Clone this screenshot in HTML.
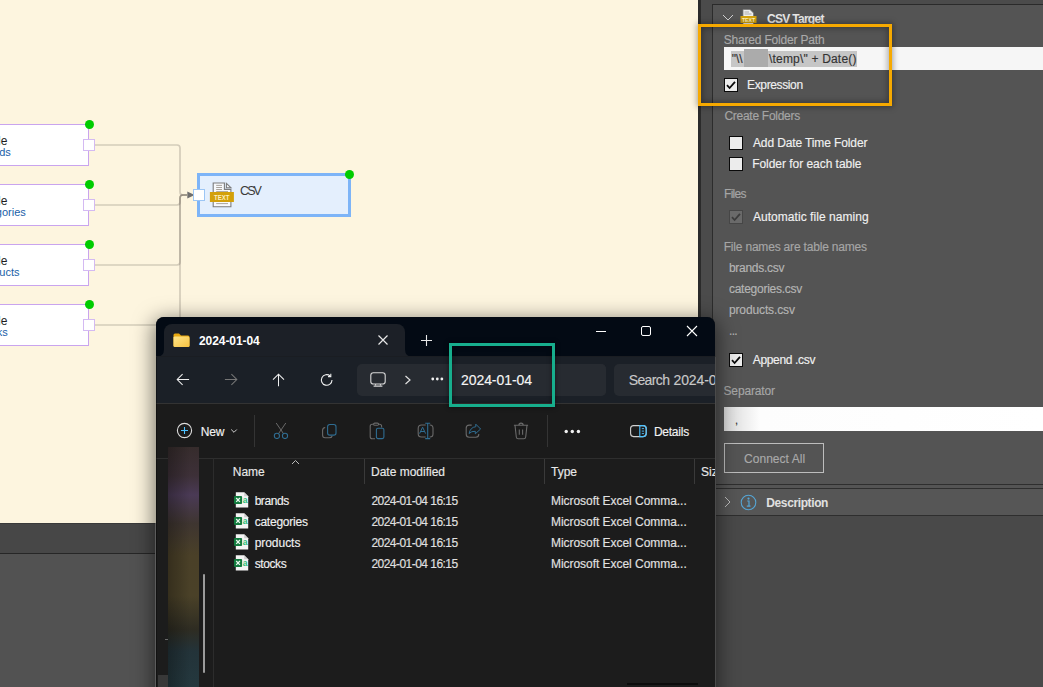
<!DOCTYPE html>
<html><head><meta charset="utf-8">
<style>
*{margin:0;padding:0;box-sizing:border-box}
html,body{width:1043px;height:687px;overflow:hidden;background:#fdf5df;font-family:"Liberation Sans",sans-serif}
.a{position:absolute}
.t{position:absolute;white-space:nowrap;line-height:1;-webkit-text-stroke:0.15px currentColor}
.tb{-webkit-text-stroke:0}
</style></head>
<body>
<div class="a" style="left:0;top:0;width:698px;height:523px;background:#fdf5df"></div>
<svg class="a" style="left:0;top:0" width="698" height="523">
<g fill="none" stroke="rgba(95,90,80,0.26)" stroke-width="1.7">
<path d="M95 145 H177 Q180 145 180 148 V192 Q180 195 183 195 H187"/>
<path d="M95 205 H177 Q180 205 180 202 V198 Q180 195 183 195 H187"/>
<path d="M95 265 H177 Q180 265 180 262 V198 Q180 195 183 195 H187"/>
<path d="M95 325 H177 Q180 325 180 322 V198 Q180 195 183 195 H187"/>
</g>
<path d="M187.3 191.4 L194.6 195 L187.3 198.6 Z" fill="#6e6e6e"/>
</svg>
<div class="a" style="left:-20px;top:124px;width:109px;height:42px;background:#fff;border:1px solid #c9a4ee;border-left:none"></div>
<div class="t" id="nl1_0" style="left:0.00px;top:134.84px;font-size:12px;color:#1e1e1e;letter-spacing:0.000px;width:7.4px;height:12px;-webkit-text-stroke:0"><span style="position:absolute;right:0;top:0">Table</span></div>
<div class="t" id="nl2_0" style="left:0.00px;top:146.69px;font-size:11px;color:#1a5fa8;letter-spacing:0.000px;width:10.8px;height:11px;-webkit-text-stroke:0"><span style="position:absolute;right:0;top:0">brands</span></div>
<div class="a" style="left:83px;top:139px;width:12px;height:12px;background:#fff;border:1px solid #d4baf2"></div>
<div class="a" style="left:84.5px;top:120px;width:9px;height:9px;border-radius:50%;background:#00cc00"></div>
<div class="a" style="left:-20px;top:184px;width:109px;height:42px;background:#fff;border:1px solid #c9a4ee;border-left:none"></div>
<div class="t" id="nl1_1" style="left:0.00px;top:194.84px;font-size:12px;color:#1e1e1e;letter-spacing:0.000px;width:7.4px;height:12px;-webkit-text-stroke:0"><span style="position:absolute;right:0;top:0">Table</span></div>
<div class="t" id="nl2_1" style="left:0.00px;top:206.69px;font-size:11px;color:#1a5fa8;letter-spacing:0.000px;width:25.8px;height:11px;-webkit-text-stroke:0"><span style="position:absolute;right:0;top:0">categories</span></div>
<div class="a" style="left:83px;top:199px;width:12px;height:12px;background:#fff;border:1px solid #d4baf2"></div>
<div class="a" style="left:84.5px;top:180px;width:9px;height:9px;border-radius:50%;background:#00cc00"></div>
<div class="a" style="left:-20px;top:244px;width:109px;height:42px;background:#fff;border:1px solid #c9a4ee;border-left:none"></div>
<div class="t" id="nl1_2" style="left:0.00px;top:254.84px;font-size:12px;color:#1e1e1e;letter-spacing:0.000px;width:7.4px;height:12px;-webkit-text-stroke:0"><span style="position:absolute;right:0;top:0">Table</span></div>
<div class="t" id="nl2_2" style="left:0.00px;top:266.69px;font-size:11px;color:#1a5fa8;letter-spacing:0.000px;width:19.5px;height:11px;-webkit-text-stroke:0"><span style="position:absolute;right:0;top:0">products</span></div>
<div class="a" style="left:83px;top:259px;width:12px;height:12px;background:#fff;border:1px solid #d4baf2"></div>
<div class="a" style="left:84.5px;top:240px;width:9px;height:9px;border-radius:50%;background:#00cc00"></div>
<div class="a" style="left:-20px;top:304px;width:109px;height:42px;background:#fff;border:1px solid #c9a4ee;border-left:none"></div>
<div class="t" id="nl1_3" style="left:0.00px;top:314.84px;font-size:12px;color:#1e1e1e;letter-spacing:0.000px;width:7.4px;height:12px;-webkit-text-stroke:0"><span style="position:absolute;right:0;top:0">Table</span></div>
<div class="t" id="nl2_3" style="left:0.00px;top:326.69px;font-size:11px;color:#1a5fa8;letter-spacing:0.000px;width:7.7px;height:11px;-webkit-text-stroke:0"><span style="position:absolute;right:0;top:0">stocks</span></div>
<div class="a" style="left:83px;top:319px;width:12px;height:12px;background:#fff;border:1px solid #d4baf2"></div>
<div class="a" style="left:84.5px;top:300px;width:9px;height:9px;border-radius:50%;background:#00cc00"></div>
<div class="a" style="left:197px;top:173px;width:154px;height:44px;background:#e4effd;border:3px solid #7db4f7"></div>
<div class="a" style="left:193px;top:189px;width:12px;height:12px;background:#fff;border:1px solid #9cc6f5"></div>
<div class="a" style="left:345px;top:170px;width:9px;height:9px;border-radius:50%;background:#00cc00"></div>
<svg class="a" style="left:205px;top:178px" width="35" height="32" viewBox="0 0 35 32">
<path d="M8.2 5 H19.4 V11.4 H25.9 V28.7 H8.2Z" fill="#f7f9fc" stroke="#7c7c7c" stroke-width="1.1"/>
<path d="M21.4 5.4 L25.9 9.7 H21.4Z" fill="#f7f9fc" stroke="#7c7c7c" stroke-width="1.1" stroke-linejoin="miter"/>
<path d="M11.2 7.4 H17 M11.2 9.5 H17 M11.2 11.5 H17 M11.2 13.6 H23 M11.2 25.6 H23" stroke="#a09a92" stroke-width="0.9"/>
<rect x="4.9" y="14" width="24" height="10" fill="#d3a00a"/>
<text x="16.8" y="21.9" font-size="8" fill="#fbeec0" text-anchor="middle" font-family="Liberation Sans" font-weight="bold" textLength="15.4" lengthAdjust="spacingAndGlyphs">TEXT</text>
</svg>
<div class="t" id="csv" style="left:240.00px;top:184.72px;font-size:12.5px;color:#3a3a3a;letter-spacing:-1.900px;-webkit-text-stroke:0">CSV</div>
<div class="a" style="left:0;top:523px;width:698px;height:30px;background:#474747;border-top:1px solid #3a3a3a"></div>
<div class="a" style="left:0;top:553px;width:698px;height:1px;background:#262626"></div>
<div class="a" style="left:0;top:554px;width:698px;height:133px;background:#525252"></div>
<div class="a" style="left:698px;top:0;width:345px;height:687px;background:#4b4b4b;border-left:3px solid #2b2b2b"></div>
<div class="a" style="left:712px;top:4px;width:331px;height:683px;background:#545454;border-left:1px solid #2c2c2c;border-top:1px solid #2a2a2a"></div>
<svg class="a" style="left:722px;top:14px" width="12" height="8"><path d="M1 1 L6 6 L11 1" fill="none" stroke="#d0d0d0" stroke-width="1"/></svg>
<svg class="a" style="left:740px;top:9px" width="17" height="17" viewBox="0 0 17 17">
<path d="M3 0.5 H10 L13.5 4 V16.5 H3Z" fill="#eee" stroke="#7a7a7a" stroke-width="0.8"/>
<path d="M4.5 3 H9 M4.5 5 H11.5" stroke="#999" stroke-width="0.8"/>
<rect x="0.5" y="7" width="16" height="7" fill="#d4a20e"/>
<text x="8.5" y="12.6" font-size="6" fill="#fff4c0" text-anchor="middle" font-family="Liberation Sans" font-weight="bold" textLength="13" lengthAdjust="spacingAndGlyphs">TEXT</text>
</svg>
<div class="t tb" id="p_csvt" style="left:767.08px;top:12.84px;font-size:12px;color:#e6e6e6;letter-spacing:-0.720px;font-weight:bold;">CSV Target</div>
<div class="t" id="p_sfp" style="left:723.68px;top:33.54px;font-size:12px;color:#a9a9a9;letter-spacing:-0.184px;">Shared Folder Path</div>
<div class="a" style="left:724px;top:47px;width:319px;height:23px;background:#f6f6f6"></div>
<div class="a" style="left:731px;top:51px;width:126px;height:16px;background:#c6c6c6"></div>
<div class="t" id="p_in1" style="left:731.70px;top:53.44px;font-size:12px;color:#333;letter-spacing:0.000px;">"\\</div>
<div class="t" id="p_in2" style="left:769.00px;top:53.44px;font-size:12px;color:#333;letter-spacing:0.187px;">\temp\" + Date()</div>
<div class="a" style="left:744px;top:49px;width:24px;height:18px;background:#ababab"></div>
<div class="a" style="left:724px;top:78px;width:14px;height:14px;background:#ececec;border:1px solid #0a0a0a"></div>
<svg class="a" style="left:724px;top:78px" width="14" height="14"><path d="M3 7.2 L5.6 10 L11 3.8" fill="none" stroke="#0a0a0a" stroke-width="1.8"/></svg>
<div class="t" id="p_expr" style="left:747.10px;top:78.84px;font-size:12px;color:#f0f0f0;letter-spacing:-0.373px;">Expression</div>
<div class="t" id="p_cf" style="left:724.48px;top:109.54px;font-size:12px;color:#a6a6a6;letter-spacing:-0.283px;">Create Folders</div>
<div class="a" style="left:729px;top:136px;width:14px;height:14px;background:#ececec;border:1px solid #0a0a0a"></div>
<div class="t" id="p_adtf" style="left:752.96px;top:136.84px;font-size:12px;color:#f0f0f0;letter-spacing:-0.118px;">Add Date Time Folder</div>
<div class="a" style="left:729px;top:157px;width:14px;height:14px;background:#ececec;border:1px solid #0a0a0a"></div>
<div class="t" id="p_ffet" style="left:752.16px;top:157.84px;font-size:12px;color:#f0f0f0;letter-spacing:-0.036px;">Folder for each table</div>
<div class="t" id="p_files" style="left:724.10px;top:187.64px;font-size:12px;color:#a6a6a6;letter-spacing:-0.740px;">Files</div>
<div class="a" style="left:729px;top:210px;width:14px;height:14px;background:#6a6a6a;border:1px solid #464646"></div>
<svg class="a" style="left:729px;top:210px" width="14" height="14"><path d="M3 7.2 L5.6 10 L11 3.8" fill="none" stroke="#3c3c3c" stroke-width="1.8"/></svg>
<div class="t" id="p_afn" style="left:752.96px;top:210.64px;font-size:12px;color:#f0f0f0;letter-spacing:0.048px;">Automatic file naming</div>
<div class="t" id="p_fnat" style="left:723.68px;top:240.74px;font-size:12px;color:#a6a6a6;letter-spacing:-0.189px;">File names are table names</div>
<div class="t" id="p_b" style="left:728.92px;top:261.84px;font-size:12px;color:#b4b4b4;letter-spacing:-0.267px;">brands.csv</div>
<div class="t" id="p_c" style="left:728.92px;top:282.84px;font-size:12px;color:#b4b4b4;letter-spacing:-0.252px;">categories.csv</div>
<div class="t" id="p_p" style="left:728.92px;top:303.84px;font-size:12px;color:#b4b4b4;letter-spacing:-0.116px;">products.csv</div>
<div class="t" id="p_dots" style="left:729.00px;top:324.84px;font-size:12px;color:#b4b4b4;letter-spacing:-0.700px;">...</div>
<div class="a" style="left:729px;top:353px;width:14px;height:14px;background:#ececec;border:1px solid #0a0a0a"></div>
<svg class="a" style="left:729px;top:353px" width="14" height="14"><path d="M3 7.2 L5.6 10 L11 3.8" fill="none" stroke="#0a0a0a" stroke-width="1.8"/></svg>
<div class="t" id="p_app" style="left:752.72px;top:353.64px;font-size:12px;color:#f0f0f0;letter-spacing:-0.336px;">Append .csv</div>
<div class="t" id="p_sep" style="left:723.50px;top:384.54px;font-size:12px;color:#a6a6a6;letter-spacing:-0.150px;">Separator</div>
<div class="a" style="left:724px;top:407px;width:319px;height:24px;background:linear-gradient(90deg,#d8d8d8 0,#fdfdfd 36px,#fff 100%)"></div>
<div class="t" id="p_comma" style="left:735.00px;top:414.69px;font-size:11px;color:#333;letter-spacing:0.000px;">,</div>
<div class="a" style="left:724px;top:443px;width:100px;height:30px;border:1px solid #bdbdbd"></div>
<div class="t" id="p_conn" style="left:744.00px;top:453.24px;font-size:12px;color:#a9a9a9;letter-spacing:0.040px;">Connect All</div>
<div class="a" style="left:713px;top:484px;width:330px;height:1px;background:#2e2e2e"></div>
<div class="a" style="left:713px;top:488px;width:330px;height:28px;background:#565656;border-top:1px solid #2e2e2e;border-bottom:1px solid #2e2e2e"></div>
<svg class="a" style="left:723px;top:496px" width="9" height="12"><path d="M2 1 L7 6 L2 11" fill="none" stroke="#bdbdbd" stroke-width="1"/></svg>
<svg class="a" style="left:740px;top:494px" width="17" height="17"><circle cx="8.5" cy="8.5" r="7.3" fill="none" stroke="#55a6d6" stroke-width="1.05"/><circle cx="8.5" cy="4.6" r="1.1" fill="#55a6d6"/><path d="M7.2 7 H9 V12.2 M6.8 12.2 H10.5" fill="none" stroke="#55a6d6" stroke-width="1.2"/></svg>
<div class="t tb" id="p_desc" style="left:766.28px;top:496.84px;font-size:12px;color:#e0e0e0;letter-spacing:-0.384px;font-weight:bold;">Description</div>
<div class="a" style="left:713px;top:516px;width:330px;height:171px;background:#494949"></div>
<div class="a" style="left:698px;top:24px;width:194px;height:82px;border:3px solid #f6a900;box-shadow:0 0 6px 1px rgba(0,0,0,0.35), inset 0 0 6px 1px rgba(0,0,0,0.35)"></div>
<div class="a" style="left:156px;top:317px;width:559px;height:400px;border-radius:8px;box-shadow:0 5px 20px 3px rgba(0,0,0,0.5)"></div>
<div class="a" style="left:156px;top:317px;width:559px;height:370px;background:#1c1c1c;border-radius:8px 8px 0 0;overflow:hidden">
<div class="a" style="left:0;top:0;width:559px;height:40px;background:#030a14"></div>
<div class="a" style="left:8px;top:7px;width:241px;height:33px;background:#1c2027;border-radius:8px 8px 0 0"></div>
<svg class="a" style="left:249px;top:32px" width="8" height="8"><path d="M0 0 V8 H8 Q0 8 0 0Z" fill="#1c2027"/></svg>
<svg class="a" style="left:0;top:32px" width="8" height="8"><path d="M8 0 V8 H0 Q8 8 8 0Z" fill="#1c2027"/></svg>
<svg class="a" style="left:17px;top:16px" width="17" height="15" viewBox="0 0 17 15">
<defs><linearGradient id="fg" x1="0" y1="0" x2="1" y2="1"><stop offset="0" stop-color="#ffe58a"/><stop offset="1" stop-color="#f7c240"/></linearGradient></defs>
<path d="M0.5 2 Q0.5 0.5 2 0.5 H6 L8 2.5 H15 Q16.5 2.5 16.5 4 V12.5 Q16.5 14 15 14 H2 Q0.5 14 0.5 12.5Z" fill="#e9a80f"/>
<path d="M0.5 4.5 Q0.5 3.5 2 3.5 H15 Q16.5 3.5 16.5 5 V12.5 Q16.5 14 15 14 H2 Q0.5 14 0.5 12.5Z" fill="url(#fg)"/>
</svg>
<div class="t tb" id="w_tab" style="left:43.00px;top:17.84px;font-size:12px;color:#fff;letter-spacing:-0.071px;font-weight:bold;">2024-01-04</div>
<svg class="a" style="left:221px;top:17px" width="12" height="12"><path d="M1.5 1.5 L10.5 10.5 M10.5 1.5 L1.5 10.5" stroke="#e8e8e8" stroke-width="1.2"/></svg>
<svg class="a" style="left:265px;top:18px" width="11" height="11"><path d="M5.5 0 V11 M0 5.5 H11" stroke="#e8e8e8" stroke-width="1.1"/></svg>
<div class="a" style="left:440px;top:14px;width:10px;height:1px;background:#fff"></div>
<div class="a" style="left:485px;top:9px;width:10px;height:10px;border:1px solid #fff;border-radius:2px"></div>
<svg class="a" style="left:530px;top:8px" width="12" height="12"><path d="M1 1 L11 11 M11 1 L1 11" stroke="#fff" stroke-width="1.1"/></svg>
<div class="a" style="left:0;top:39px;width:559px;height:47px;background:#1b2027;border-top:1px solid #1a1d22"></div>
<svg class="a" style="left:20px;top:56px" width="14" height="14" viewBox="0 0 14 14"><path d="M13.1 6.5 H1.2 M6.6 1.1 L1.2 6.5 L6.6 11.9" fill="none" stroke="#f0f0f0" stroke-width="1.05"/></svg>
<svg class="a" style="left:68px;top:56px" width="14" height="14" viewBox="0 0 14 14"><path d="M0.9 6.5 H12.8 M7.4 1.1 L12.8 6.5 L7.4 11.9" fill="none" stroke="#767676" stroke-width="1.05"/></svg>
<svg class="a" style="left:116px;top:56px" width="14" height="14" viewBox="0 0 14 14"><path d="M6.5 13.2 V1.2 M1 6.7 L6.5 1.2 L12 6.7" fill="none" stroke="#f0f0f0" stroke-width="1.05"/></svg>
<svg class="a" style="left:164px;top:56px" width="14" height="14" viewBox="0 0 14 14"><path d="M12 7 A5.3 5.3 0 1 1 10.2 3" fill="none" stroke="#f0f0f0" stroke-width="1.1"/><path d="M10.8 0.8 V3.6 H8" fill="none" stroke="#f0f0f0" stroke-width="1.1"/></svg>
<div class="a" style="left:201px;top:47px;width:249px;height:32px;background:#272b31;border-radius:5px"></div>
<svg class="a" style="left:213px;top:55px" width="18" height="16" viewBox="0 0 18 16"><rect x="1.8" y="0.7" width="14.4" height="11.3" rx="2.6" fill="none" stroke="#d8d8d8" stroke-width="1.1"/><path d="M6.6 12 V13.6 M11.4 12 V13.6" stroke="#d8d8d8" stroke-width="1"/><path d="M4.6 14.2 H13.4" stroke="#d8d8d8" stroke-width="1.2"/></svg>
<svg class="a" style="left:248px;top:58px" width="8" height="10"><path d="M1.5 1 L6 5 L1.5 9" fill="none" stroke="#e0e0e0" stroke-width="1.2"/></svg>
<svg class="a" style="left:275px;top:60px" width="13" height="4"><circle cx="1.75" cy="2" r="1.4" fill="#f0f0f0"/><circle cx="6.3" cy="2" r="1.4" fill="#f0f0f0"/><circle cx="10.85" cy="2" r="1.4" fill="#f0f0f0"/></svg>
<div class="a" style="left:293px;top:47px;width:157px;height:32px;background:#272b31;border-radius:0 5px 5px 0"></div>
<div class="t" id="w_addr" style="left:305.00px;top:56.15px;font-size:14px;color:#f4f4f4;letter-spacing:-0.071px;">2024-01-04</div>
<div class="a" style="left:458px;top:47px;width:120px;height:32px;background:#272b31;border-radius:5px"></div>
<div class="t" id="w_search" style="left:472.70px;top:56.15px;font-size:14px;color:#c8c8c8;letter-spacing:-0.600px;">Search</div>
<div class="t" id="w_search2" style="left:517.50px;top:56.15px;font-size:14px;color:#c8c8c8;letter-spacing:-0.100px;">2024-01-04</div>
<div class="a" style="left:0;top:86px;width:559px;height:56px;background:#1b1b1b;border-top:1px solid #333;border-bottom:1px solid #2e2e2e"></div>
<svg class="a" style="left:20px;top:105px" width="17" height="17" viewBox="0 0 17 17"><circle cx="8.5" cy="8.5" r="7.1" fill="none" stroke="#dcdcdc" stroke-width="1.1"/><path d="M8.5 5 V12 M5 8.5 H12" stroke="#4cc2ff" stroke-width="1.1"/></svg>
<div class="t" id="w_new" style="left:44.68px;top:108.84px;font-size:12px;color:#f2f2f2;letter-spacing:-0.160px;">New</div>
<svg class="a" style="left:74px;top:111px" width="8" height="6"><path d="M1.2 1.5 L4 4.3 L6.8 1.5" fill="none" stroke="#cfcfcf" stroke-width="1"/></svg>
<div class="a" style="left:98px;top:98px;width:1px;height:32px;background:#343434"></div>
<svg class="a" style="left:117px;top:105px" width="16" height="17" viewBox="0 0 16 17"><path d="M3.2 1 L10.6 11.8 M12.8 1 L5.4 11.8" stroke="#6a6a6a" stroke-width="1"/><circle cx="3.9" cy="13.9" r="2.6" fill="none" stroke="#2f6d92" stroke-width="1.1"/><circle cx="12" cy="13.9" r="2.6" fill="none" stroke="#2f6d92" stroke-width="1.1"/></svg>
<svg class="a" style="left:165px;top:106px" width="16" height="16" viewBox="0 0 16 16"><rect x="6.6" y="1.5" width="8.4" height="10.6" rx="2.2" fill="none" stroke="#2f6d92" stroke-width="1.1"/><path d="M4.2 4.5 Q1.6 4.8 1.6 7.3 V12.3 Q1.6 14.8 4.1 14.8 H8.3 Q10.6 14.8 11.2 13" fill="none" stroke="#6a6a6a" stroke-width="1.1"/></svg>
<svg class="a" style="left:213px;top:105px" width="17" height="18" viewBox="0 0 17 18"><path d="M4.3 2.3 H3.2 Q1.2 2.3 1.2 4.3 V14.7 Q1.2 16.7 3.2 16.7 H6" fill="none" stroke="#6a6a6a" stroke-width="1.1"/><path d="M9.6 2.3 H10.6 Q12.6 2.3 12.6 4.3 V5.5" fill="none" stroke="#6a6a6a" stroke-width="1.1"/><rect x="4.6" y="1.1" width="5" height="2.2" rx="1.1" fill="none" stroke="#6a6a6a" stroke-width="1.1"/><rect x="7.4" y="6.2" width="7.5" height="10.4" rx="1.6" fill="none" stroke="#2f6d92" stroke-width="1.1"/></svg>
<svg class="a" style="left:261px;top:105px" width="17" height="18" viewBox="0 0 17 18"><path d="M8.7 3 H4.5 Q1.2 3 1.2 6.3 V11.7 Q1.2 15 4.5 15 H8.7 M12.6 3 H13 Q16 3 16 6.3 V11.7 Q16 15 13 15 H12.6" fill="none" stroke="#6a6a6a" stroke-width="1.1"/><path d="M10.7 1.2 V16.6 M8.2 1.2 H13.2 M8.2 16.6 H13.2" stroke="#2f6d92" stroke-width="1.1"/><path d="M2.6 11.6 L5.6 5.2 L8.6 11.6 M3.7 9.5 H7.5" fill="none" stroke="#2f6d92" stroke-width="1"/></svg>
<svg class="a" style="left:309px;top:105px" width="17" height="18" viewBox="0 0 17 18"><path d="M6.7 3.1 H4.2 Q1.2 3.1 1.2 6.1 V12.3 Q1.2 15.3 4.2 15.3 H10.8 Q13.8 15.3 13.8 12.3 V12" fill="none" stroke="#6a6a6a" stroke-width="1.1"/><path d="M10.8 2.2 L15.6 7 L10.3 11.8 V9.3 Q6.5 9 4.1 11.5 Q5.3 5.3 10.8 4.7 Z" fill="none" stroke="#2f6d92" stroke-width="1" stroke-linejoin="round"/></svg>
<svg class="a" style="left:357px;top:105px" width="16" height="18" viewBox="0 0 16 18"><path d="M0.9 3.2 H15.1 M5.9 3.2 Q5.9 1.1 8 1.1 Q10.2 1.1 10.2 3.2 M2 3.2 L3.3 15 Q3.5 16.7 5.2 16.7 H10.8 Q12.5 16.7 12.7 15 L14 3.2 M6.3 7.4 V12.7 M9.6 7.4 V12.7" fill="none" stroke="#6a6a6a" stroke-width="1.1"/></svg>
<div class="a" style="left:391px;top:98px;width:1px;height:32px;background:#343434"></div>
<svg class="a" style="left:408px;top:112px" width="17" height="5"><circle cx="2.2" cy="2.5" r="1.7" fill="#f0f0f0"/><circle cx="8.3" cy="2.5" r="1.7" fill="#f0f0f0"/><circle cx="14.4" cy="2.5" r="1.7" fill="#f0f0f0"/></svg>
<svg class="a" style="left:474px;top:108px" width="18" height="13" viewBox="0 0 18 13"><rect x="0.6" y="0.6" width="15.6" height="11" rx="3" fill="none" stroke="#d0d0d0" stroke-width="1.1"/><path d="M9.8 0.6 H13.2 Q16.2 0.6 16.2 3.6 V8.6 Q16.2 11.6 13.2 11.6 H9.8Z" fill="none" stroke="#4cc2ff" stroke-width="1.1"/><path d="M11.8 3.6 H14 M11.8 6.1 H14 M11.8 8.6 H14" stroke="#4cc2ff" stroke-width="0.9"/></svg>
<div class="t" id="w_details" style="left:497.92px;top:108.84px;font-size:12px;color:#f2f2f2;letter-spacing:-0.240px;">Details</div>
<div class="a" style="left:12px;top:130px;width:31px;height:240px;background:linear-gradient(180deg,#362c2c 0%,#3d3038 12%,#4a3a55 20%,#3e3530 32%,#4a4028 45%,#4a4128 62%,#2e2c22 76%,#233339 85%,#24383e 100%)"></div>
<div class="a" style="left:12px;top:130px;width:31px;height:240px;background:linear-gradient(90deg,rgba(0,0,0,0.28),rgba(0,0,0,0) 70%)"></div>
<div class="a" style="left:47px;top:257px;width:2px;height:99px;background:#9b9b9b;border-radius:1px"></div>
<div class="a" style="left:57px;top:141px;width:1px;height:229px;background:#2c2c2c"></div>
<div class="t" id="w_name" style="left:76.84px;top:148.54px;font-size:12px;color:#e8e8e8;letter-spacing:-0.053px;">Name</div>
<svg class="a" style="left:135px;top:142px" width="9" height="6"><path d="M1 5 L4.5 1.5 L8 5" fill="none" stroke="#bdbdbd" stroke-width="1"/></svg>
<div class="a" style="left:208px;top:142px;width:1px;height:25px;background:#3a3a3a"></div>
<div class="t" id="w_date" style="left:215.00px;top:148.54px;font-size:12px;color:#e8e8e8;letter-spacing:0.000px;">Date modified</div>
<div class="a" style="left:388px;top:142px;width:1px;height:25px;background:#3a3a3a"></div>
<div class="t" id="w_type" style="left:395.00px;top:148.54px;font-size:12px;color:#e8e8e8;letter-spacing:0.000px;">Type</div>
<div class="a" style="left:538px;top:142px;width:1px;height:25px;background:#3a3a3a"></div>
<div class="t" id="w_size" style="left:545.00px;top:148.54px;font-size:12px;color:#e8e8e8;letter-spacing:0.000px;">Size</div>
<svg class="a" style="left:78px;top:175px" width="15" height="16" viewBox="0 0 15 16"><path d="M1.8 0.3 H10.2 L14.2 4.3 V15.6 H1.8Z" fill="#f4f4f4"/><path d="M10.2 0.3 V4.3 H14.2Z" fill="#cfcfcf"/><rect x="0" y="3.9" width="8.1" height="8.1" rx="1" fill="#127a3e"/><path d="M2.2 6 L5.9 9.9 M5.9 6 L2.2 9.9" stroke="#e8f5ec" stroke-width="1.3"/><text x="11.2" y="11.2" font-size="8.6" fill="#2fbf78" text-anchor="middle" font-family="Liberation Sans" font-weight="bold">a</text></svg>
<div class="t" id="w_r0_n" style="left:98.64px;top:177.74px;font-size:12px;color:#f0f0f0;letter-spacing:-0.432px;">brands</div>
<div class="t" id="w_r0_d" style="left:215.48px;top:177.74px;font-size:12px;color:#e0e0e0;letter-spacing:-0.539px;">2024-01-04 16:15</div>
<div class="t" id="w_r0_t" style="left:395.00px;top:177.74px;font-size:12px;color:#e0e0e0;letter-spacing:-0.042px;">Microsoft Excel Comma...</div>
<svg class="a" style="left:78px;top:196px" width="15" height="16" viewBox="0 0 15 16"><path d="M1.8 0.3 H10.2 L14.2 4.3 V15.6 H1.8Z" fill="#f4f4f4"/><path d="M10.2 0.3 V4.3 H14.2Z" fill="#cfcfcf"/><rect x="0" y="3.9" width="8.1" height="8.1" rx="1" fill="#127a3e"/><path d="M2.2 6 L5.9 9.9 M5.9 6 L2.2 9.9" stroke="#e8f5ec" stroke-width="1.3"/><text x="11.2" y="11.2" font-size="8.6" fill="#2fbf78" text-anchor="middle" font-family="Liberation Sans" font-weight="bold">a</text></svg>
<div class="t" id="w_r1_n" style="left:98.64px;top:198.74px;font-size:12px;color:#f0f0f0;letter-spacing:-0.232px;">categories</div>
<div class="t" id="w_r1_d" style="left:215.48px;top:198.74px;font-size:12px;color:#e0e0e0;letter-spacing:-0.539px;">2024-01-04 16:15</div>
<div class="t" id="w_r1_t" style="left:395.00px;top:198.74px;font-size:12px;color:#e0e0e0;letter-spacing:-0.042px;">Microsoft Excel Comma...</div>
<svg class="a" style="left:78px;top:217px" width="15" height="16" viewBox="0 0 15 16"><path d="M1.8 0.3 H10.2 L14.2 4.3 V15.6 H1.8Z" fill="#f4f4f4"/><path d="M10.2 0.3 V4.3 H14.2Z" fill="#cfcfcf"/><rect x="0" y="3.9" width="8.1" height="8.1" rx="1" fill="#127a3e"/><path d="M2.2 6 L5.9 9.9 M5.9 6 L2.2 9.9" stroke="#e8f5ec" stroke-width="1.3"/><text x="11.2" y="11.2" font-size="8.6" fill="#2fbf78" text-anchor="middle" font-family="Liberation Sans" font-weight="bold">a</text></svg>
<div class="t" id="w_r2_n" style="left:98.64px;top:219.74px;font-size:12px;color:#f0f0f0;letter-spacing:-0.032px;">products</div>
<div class="t" id="w_r2_d" style="left:215.48px;top:219.74px;font-size:12px;color:#e0e0e0;letter-spacing:-0.539px;">2024-01-04 16:15</div>
<div class="t" id="w_r2_t" style="left:395.00px;top:219.74px;font-size:12px;color:#e0e0e0;letter-spacing:-0.042px;">Microsoft Excel Comma...</div>
<svg class="a" style="left:78px;top:238px" width="15" height="16" viewBox="0 0 15 16"><path d="M1.8 0.3 H10.2 L14.2 4.3 V15.6 H1.8Z" fill="#f4f4f4"/><path d="M10.2 0.3 V4.3 H14.2Z" fill="#cfcfcf"/><rect x="0" y="3.9" width="8.1" height="8.1" rx="1" fill="#127a3e"/><path d="M2.2 6 L5.9 9.9 M5.9 6 L2.2 9.9" stroke="#e8f5ec" stroke-width="1.3"/><text x="11.2" y="11.2" font-size="8.6" fill="#2fbf78" text-anchor="middle" font-family="Liberation Sans" font-weight="bold">a</text></svg>
<div class="t" id="w_r3_n" style="left:98.64px;top:240.74px;font-size:12px;color:#f0f0f0;letter-spacing:-0.382px;">stocks</div>
<div class="t" id="w_r3_d" style="left:215.48px;top:240.74px;font-size:12px;color:#e0e0e0;letter-spacing:-0.539px;">2024-01-04 16:15</div>
<div class="t" id="w_r3_t" style="left:395.00px;top:240.74px;font-size:12px;color:#e0e0e0;letter-spacing:-0.042px;">Microsoft Excel Comma...</div>
<div class="a" style="left:2px;top:358px;width:10px;height:12px;background:#383838"></div>
<div class="a" style="left:9px;top:322px;width:3px;height:1px;background:#6a6a6a"></div>
<div class="a" style="left:471px;top:366px;width:71px;height:2px;background:#0c0c0c"></div>
<div class="a" style="left:0;top:40px;width:1px;height:330px;background:rgba(0,0,0,0.35)"></div>
</div>
<div class="a" style="left:155px;top:523px;width:1px;height:164px;background:#5c5c5c"></div>
<div class="a" style="left:449px;top:343px;width:106px;height:64px;border:3px solid #17ae8d;box-shadow:0 0 4px 1px rgba(0,0,0,0.35), inset 0 0 4px 1px rgba(0,0,0,0.3)"></div>
<div class="a" style="left:715px;top:357px;width:1px;height:330px;background:#4a4a4a"></div>
</body></html>
